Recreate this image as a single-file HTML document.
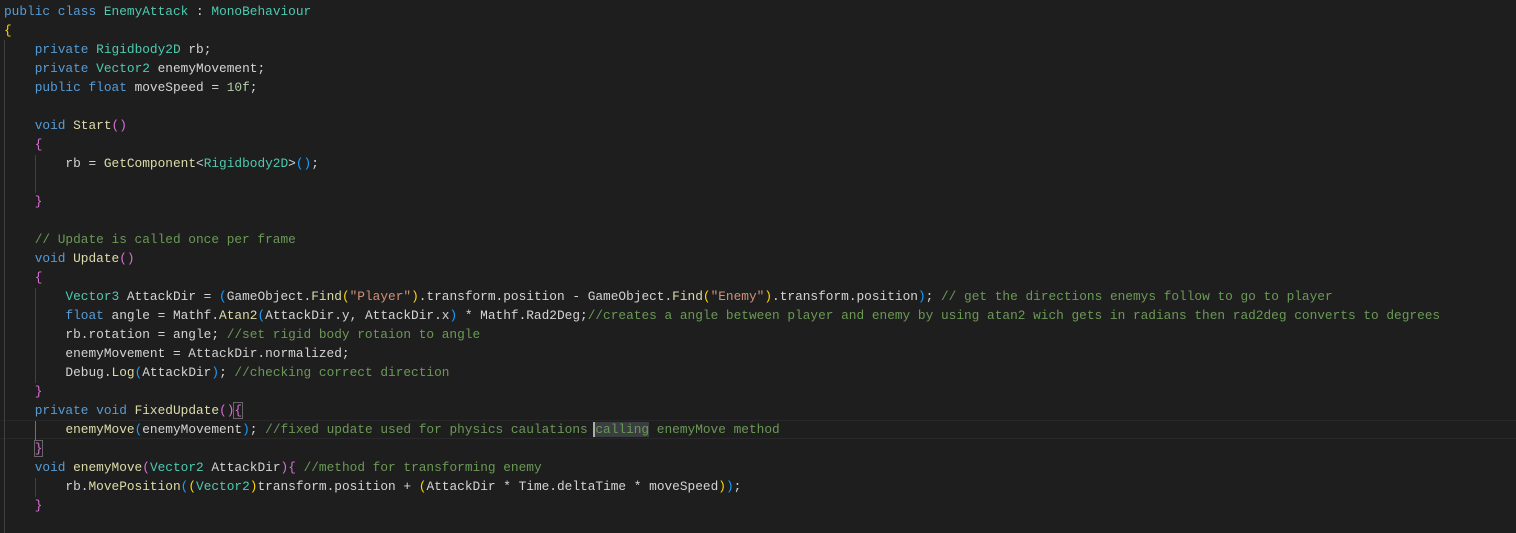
<!DOCTYPE html>
<html><head><meta charset="utf-8"><style>
html,body{margin:0;padding:0;background:#1e1e1e;width:1516px;height:533px;overflow:hidden}
.c{position:absolute;left:4px;top:2px;font-family:"Liberation Mono",monospace;font-size:12.81px;line-height:19px;color:#d4d4d4;white-space:pre}
.k{color:#569cd6}.t{color:#4ec9b0}.f{color:#dcdcaa}.s{color:#ce9178}.m{color:#6a9955}.n{color:#b5cea8}
.g{color:#ffd700}.p{color:#da70d6}.b{color:#179fff}
.cur{position:absolute;left:0;top:420px;width:1516px;height:17px;border-top:1px solid #282828;border-bottom:1px solid #282828}
.ig{position:absolute;width:1px;background:#404040}
.sel{background:#3a3d41;box-shadow:-2px 0 0 #aeafad}
.bx{outline:1px solid #666}
</style></head><body>
<div class="cur"></div>
<div class="ig" style="left:4px;top:40px;height:493px"></div>
<div class="ig" style="left:35px;top:155px;height:38px"></div>
<div class="ig" style="left:35px;top:288px;height:95px"></div>
<div class="ig" style="left:35px;top:421px;height:19px;background:#707070"></div>
<div class="ig" style="left:35px;top:478px;height:19px"></div>
<div class="c"><span class="k">public</span> <span class="k">class</span> <span class="t">EnemyAttack</span> : <span class="t">MonoBehaviour</span>
<span class="g">{</span>
    <span class="k">private</span> <span class="t">Rigidbody2D</span> rb;
    <span class="k">private</span> <span class="t">Vector2</span> enemyMovement;
    <span class="k">public</span> <span class="k">float</span> moveSpeed = <span class="n">10f</span>;

    <span class="k">void</span> <span class="f">Start</span><span class="p">()</span>
    <span class="p">{</span>
        rb = <span class="f">GetComponent</span>&lt;<span class="t">Rigidbody2D</span>&gt;<span class="b">()</span>;

    <span class="p">}</span>

    <span class="m">// Update is called once per frame</span>
    <span class="k">void</span> <span class="f">Update</span><span class="p">()</span>
    <span class="p">{</span>
        <span class="t">Vector3</span> AttackDir = <span class="b">(</span>GameObject.<span class="f">Find</span><span class="g">(</span><span class="s">"Player"</span><span class="g">)</span>.transform.position - GameObject.<span class="f">Find</span><span class="g">(</span><span class="s">"Enemy"</span><span class="g">)</span>.transform.position<span class="b">)</span>; <span class="m">// get the directions enemys follow to go to player</span>
        <span class="k">float</span> angle = Mathf.<span class="f">Atan2</span><span class="b">(</span>AttackDir.y, AttackDir.x<span class="b">)</span> * Mathf.Rad2Deg;<span class="m">//creates a angle between player and enemy by using atan2 wich gets in radians then rad2deg converts to degrees</span>
        rb.rotation = angle; <span class="m">//set rigid body rotaion to angle</span>
        enemyMovement = AttackDir.normalized;
        Debug.<span class="f">Log</span><span class="b">(</span>AttackDir<span class="b">)</span>; <span class="m">//checking correct direction</span>
    <span class="p">}</span>
    <span class="k">private</span> <span class="k">void</span> <span class="f">FixedUpdate</span><span class="p">()</span><span class="p bx">{</span>
        <span class="f">enemyMove</span><span class="b">(</span>enemyMovement<span class="b">)</span>; <span class="m">//fixed update used for physics caulations <span class="sel">calling</span> enemyMove method</span>
    <span class="p bx">}</span>
    <span class="k">void</span> <span class="f">enemyMove</span><span class="p">(</span><span class="t">Vector2</span> AttackDir<span class="p">)</span><span class="p">{</span> <span class="m">//method for transforming enemy</span>
        rb.<span class="f">MovePosition</span><span class="b">(</span><span class="g">(</span><span class="t">Vector2</span><span class="g">)</span>transform.position + <span class="g">(</span>AttackDir * Time.deltaTime * moveSpeed<span class="g">)</span><span class="b">)</span>;
    <span class="p">}</span></div>
</body></html>
